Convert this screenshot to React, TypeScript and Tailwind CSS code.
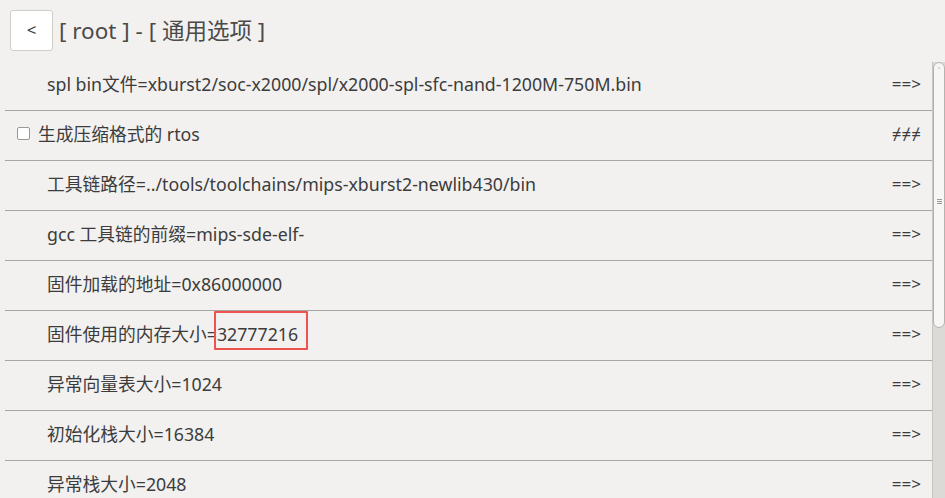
import React from 'react';

type Row = {
  label: string;
  value?: string;
  checkbox?: boolean;
  arrow: string;
  mark?: boolean;
};

const rows: Row[] = [
  { label: 'spl bin文件=', value: 'xburst2/soc-x2000/spl/x2000-spl-sfc-nand-1200M-750M.bin', arrow: '==>' },
  { label: '生成压缩格式的 rtos', checkbox: true, arrow: '≠≠≠' },
  { label: '工具链路径=', value: '../tools/toolchains/mips-xburst2-newlib430/bin', arrow: '==>' },
  { label: 'gcc 工具链的前缀=', value: 'mips-sde-elf-', arrow: '==>' },
  { label: '固件加载的地址=', value: '0x86000000', arrow: '==>' },
  { label: '固件使用的内存大小=', value: '32777216', arrow: '==>', mark: true },
  { label: '异常向量表大小=', value: '1024', arrow: '==>' },
  { label: '初始化栈大小=', value: '16384', arrow: '==>' },
  { label: '异常栈大小=', value: '2048', arrow: '==>' },
];

const ConfigPage = () => {
  return (
    <div
      className="w-[945px] h-[498px] overflow-hidden bg-[#f2f1f0] text-[#3c3c3c]"
      style={{ fontFamily: '"Noto Sans", "Noto Sans CJK SC", sans-serif' }}
    >
      {/* Header */}
      <div className="flex items-center h-[61px] pl-[10px] pb-[1px]">
        <button className="w-[43px] h-[41px] bg-white border border-[#cfcdca] rounded-[3px] text-[17px] text-[#3c3c3c] flex items-center justify-center">
          &lt;
        </button>
        <h1 className="ml-[6px] mt-[2px] text-[22.5px] leading-none text-[#4a4a4a]">[ root ] - [ 通用选项 ]</h1>
      </div>

      {/* List + scrollbar */}
      <div className="flex h-[437px]">
        <div className="flex-1 pl-[5px]">
          {rows.map((row, i) => (
            <div
              key={i}
              className="h-[50px] pb-[4px] flex items-center border-b border-[#a8a6a3] text-[17.75px] leading-[24px]"
            >
              {row.checkbox ? (
                <div className="flex items-center pl-[12px]">
                  <span className="w-[13px] h-[13px] bg-white border border-[#9a9896] rounded-[2px] mr-[8px]" />
                  <span>{row.label}</span>
                </div>
              ) : (
                <div className="pl-[42px] whitespace-nowrap">
                  <span>{row.label}</span>
                  {row.mark ? (
                    <span className="relative">
                      {row.value}
                      <span className="absolute -left-[3px] -right-[10px] -top-[11px] -bottom-[4px] border-2 border-[#ef5350] rounded-[1px]" />
                    </span>
                  ) : (
                    <span>{row.value}</span>
                  )}
                </div>
              )}
              <span className="ml-auto pr-[11px] text-[17px] text-[#3c3c3c]">{row.arrow}</span>
            </div>
          ))}
        </div>

        {/* Scrollbar */}
        <div className="w-[13px] mt-[1px] bg-[#dcdad7] border-l border-[#c8c6c3] flex flex-col">
          <div className="h-[266px] bg-[#f7f6f5] border border-[#b5b3b0] rounded-[7px] flex flex-col items-center">
            <span className="text-[8px] leading-none text-[#888] mt-[4px]">˄</span>
            <div className="my-auto flex flex-col gap-[1px] items-center">
              <span className="w-[5px] h-[1px] bg-[#999]" />
              <span className="w-[5px] h-[1px] bg-[#999]" />
              <span className="w-[5px] h-[1px] bg-[#999]" />
            </div>
          </div>
        </div>
      </div>
    </div>
  );
};

export default ConfigPage;
